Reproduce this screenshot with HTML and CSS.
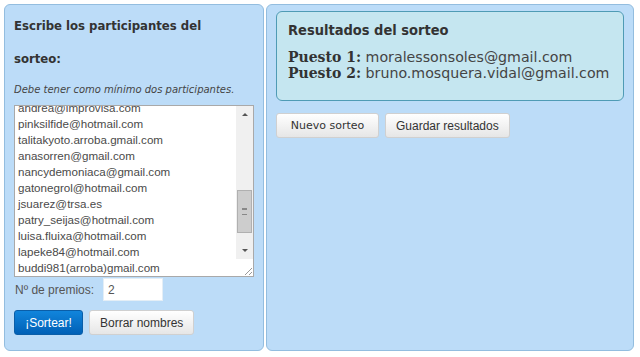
FILE: index.html
```html
<!DOCTYPE html>
<html lang="es">
<head>
    <meta charset="UTF-8">
    <title>Sorteo</title>
    <link rel="stylesheet" href="styles.css">
</head>
<body>
    <div class="page">
        <div class="panel panel-left">
            <h3 class="title">Escribe los participantes del sorteo:</h3>
            <p class="hint">Debe tener como mínimo dos participantes.</p>
            <div class="textbox">
                <div class="textbox-view">
                    <div class="textbox-lines">
                        <div>andrea@improvisa.com</div>
                        <div>pinksilfide@hotmail.com</div>
                        <div>talitakyoto.arroba.gmail.com</div>
                        <div>anasorren@gmail.com</div>
                        <div>nancydemoniaca@gmail.com</div>
                        <div>gatonegrol@hotmail.com</div>
                        <div>jsuarez@trsa.es</div>
                        <div>patry_seijas@hotmail.com</div>
                        <div>luisa.fluixa@hotmail.com</div>
                        <div>lapeke84@hotmail.com</div>
                        <div>buddi981(arroba)gmail.com</div>
                    </div>
                </div>
                <div class="scrollbar">
                    <div class="sb-btn"><span class="arrow-up"></span></div>
                    <div class="sb-track"><div class="sb-thumb"><span class="grip"></span></div></div>
                    <div class="sb-btn"><span class="arrow-down"></span></div>
                    <div class="sb-corner">
                        <svg width="10" height="10" viewBox="0 0 10 10"><path d="M9 2 L2 9 M9 6 L6 9" stroke="#999" stroke-width="1"/></svg>
                    </div>
                </div>
            </div>
            <div class="prizes">
                <label for="premios">Nº de premios:</label>
                <input type="text" id="premios" value="2">
            </div>
            <div class="actions">
                <button class="btn btn-primary">¡Sortear!</button>
                <button class="btn">Borrar nombres</button>
            </div>
        </div>

        <div class="panel panel-right">
            <div class="results">
                <h3 class="results-title">Resultados del sorteo</h3>
                <div class="result"><b>Puesto 1:</b> moralessonsoles@gmail.com</div>
                <div class="result"><b>Puesto 2:</b> bruno.mosquera.vidal@gmail.com</div>
            </div>
            <div class="actions actions-right">
                <button class="btn btn-verdana">Nuevo sorteo</button>
                <button class="btn">Guardar resultados</button>
            </div>
        </div>
    </div>
</body>
</html>
```

FILE: styles.css
```css
body {
    margin: 0;
    background-color: #ffffff;
    font-family: "Liberation Sans", Arial, sans-serif;
}
.page {
    display: flex;
    gap: 2px;
    padding: 4px;
}
.panel {
    background-color: #bcdcf8;
    border: 1px solid #93bddf;
    border-radius: 6px;
    height: 345px;
    padding: 0 9px;
}
.panel-left {
    width: 240px;
}
.panel-right {
    width: 348px;
    padding-top: 6px;
    height: 339px;
}
.title {
    margin: 0;
    padding-top: 4px;
    padding-right: 30px;
    font-family: "DejaVu Sans Condensed", "DejaVu Sans", sans-serif;
    font-size: 13px;
    line-height: 33px;
    color: #333;
}
.hint {
    margin: 8px 0 0;
    font-family: "DejaVu Sans", sans-serif;
    font-style: italic;
    font-size: 10px;
    line-height: 14px;
    color: #444;
}
.textbox {
    display: flex;
    margin-top: 8px;
    height: 170px;
    border: 1px solid #a9a9a9;
    background-color: #fff;
}
.textbox-view {
    flex: 1;
    overflow: hidden;
    padding-left: 3px;
}
.textbox-lines {
    margin-top: -6px;
    font-size: 11.6px;
    line-height: 16px;
    color: #4a4a4a;
}
.scrollbar {
    width: 17px;
    display: flex;
    flex-direction: column;
    background-color: #f0f0f0;
}
.sb-btn {
    height: 17px;
    display: flex;
    align-items: center;
    justify-content: center;
}
.arrow-up, .arrow-down {
    width: 0;
    height: 0;
    border-left: 3px solid transparent;
    border-right: 3px solid transparent;
}
.arrow-up {
    border-bottom: 3px solid #555;
}
.arrow-down {
    border-top: 3px solid #555;
}
.sb-track {
    flex: 1;
    padding-top: 67px;
}
.sb-thumb {
    margin: 0 1px;
    height: 43px;
    background-color: #cdcdcd;
    border: 1px solid #b0b0b0;
    box-sizing: border-box;
    display: flex;
    align-items: center;
    justify-content: center;
}
.grip {
    width: 5px;
    height: 5px;
    border-top: 1px solid #888;
    border-bottom: 1px solid #888;
    box-shadow: inset 0 2px 0 -1px #888;
}
.sb-corner {
    height: 17px;
    background-color: #fff;
    display: flex;
    align-items: flex-end;
    justify-content: flex-end;
}
.prizes {
    display: flex;
    align-items: center;
    margin-top: 1px;
    font-size: 12px;
    color: #555;
}
.prizes label {
    width: 88px;
    padding-left: 1px;
}
.prizes input {
    width: 60px;
    height: 23px;
    box-sizing: border-box;
    border: 1px solid #e4eef6;
    padding: 0 4px;
    font-family: "Liberation Sans", Arial, sans-serif;
    font-size: 12px;
    color: #555;
}
.actions {
    display: flex;
    gap: 6px;
    margin-top: 9px;
}
.actions-right {
    margin-top: 12px;
}
.btn {
    height: 25px;
    padding: 0 10px;
    border: 1px solid #d0d0d0;
    border-radius: 3px;
    background: linear-gradient(#ffffff, #e6e6e6);
    font-family: "Liberation Sans", Arial, sans-serif;
    font-size: 12px;
    color: #333;
}
.btn-primary {
    width: 69px;
    padding: 0;
    border-color: #0a5ea8;
    background: linear-gradient(#1185dc, #0060b6);
    color: #fff;
}
.btn-verdana {
    width: 103px;
    font-family: "DejaVu Sans", sans-serif;
    font-size: 11px;
}
.results {
    height: 88px;
    border: 1px solid #4f9bb5;
    border-radius: 6px;
    background-color: #c5e6f0;
    padding: 0 0 0 11px;
}
.results-title {
    margin: 0;
    padding-top: 9px;
    padding-bottom: 10px;
    font-family: "DejaVu Sans Condensed", "DejaVu Sans", sans-serif;
    font-size: 14.5px;
    line-height: 18px;
    color: #333;
}
.result {
    white-space: nowrap;
    font-family: "DejaVu Sans", sans-serif;
    font-size: 14.2px;
    line-height: 16px;
    color: #444;
}
.result b {
    font-family: "DejaVu Serif", serif;
    font-size: 14px;
    color: #333;
}
```
